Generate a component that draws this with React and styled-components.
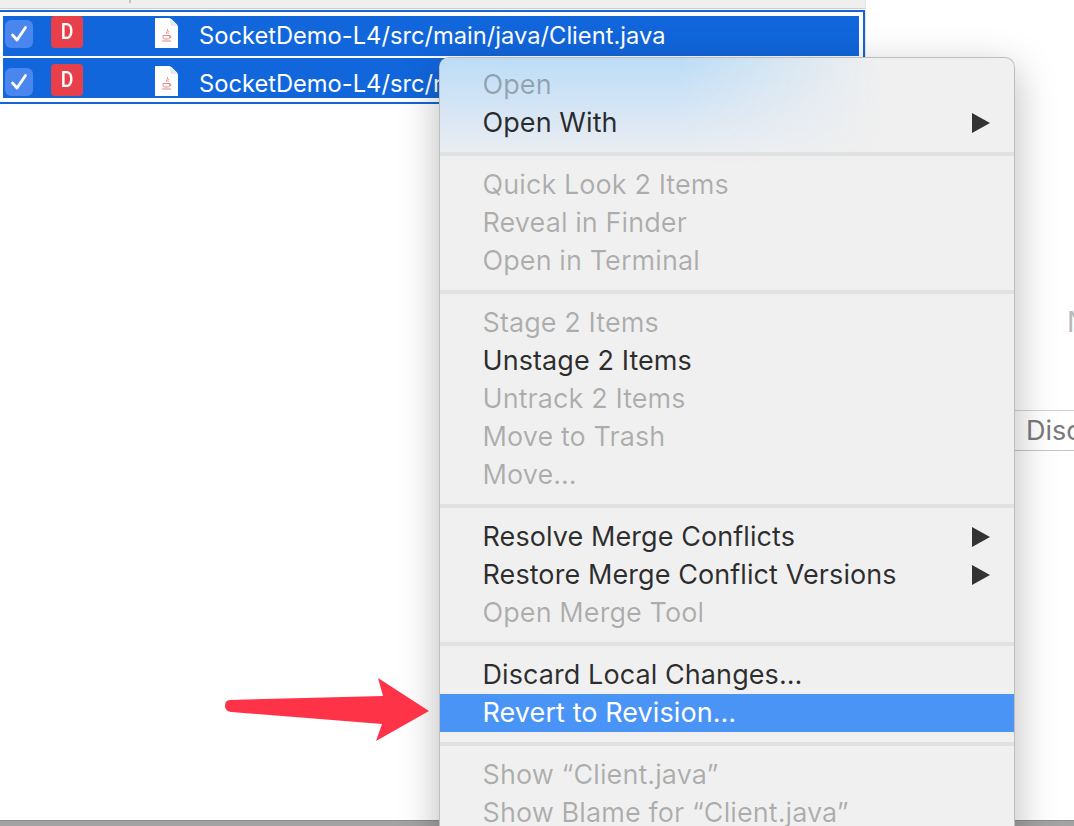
import React from "react";
import styled, { createGlobalStyle } from "styled-components";

const GlobalStyle = createGlobalStyle`
  html, body {
    margin: 0;
    height: 100%;
    background: #fff;
    overflow: hidden;
  }
  body {
    font-family: Inter, "Liberation Sans", sans-serif;
  }
`;

const Page = styled.div`
  position: relative;
  width: 1074px;
  height: 826px;
  display: flex;
  flex-direction: column;
  overflow: hidden;
`;

const Main = styled.div`
  flex: 1;
  min-height: 0;
  display: flex;
`;

const BottomStrip = styled.div`
  height: 5px;
  background: #a3a3a3;
  border-top: 1px solid #8c8c8c;
`;

const LeftPane = styled.div`
  width: 865px;
  border-right: 1px solid #e4e4e4;
  background: #fff;
`;

const Header = styled.div`
  position: relative;
  height: 8px;
  background: #efefef;
  border-bottom: 1px solid #cfcfcf;
  margin-bottom: 1px;

  &::after {
    content: "";
    position: absolute;
    left: 129px;
    top: 0;
    width: 2px;
    height: 3px;
    background: #c4c4c4;
  }
`;

const SelectionFrame = styled.div`
  display: flex;
  flex-direction: column;
  gap: 2px;
  padding: 4px 4px 4px 3px;
  border: 2px solid #1166dc;
  border-left: none;
`;

const Row = styled.div`
  height: 40px;
  display: flex;
  align-items: flex-start;
  padding-top: ${(p) => p.$offset}px;
  box-sizing: border-box;
  background: #1166dc;
  overflow: hidden;
`;

const Check = styled.div`
  width: 28px;
  height: 28px;
  margin: 4px 0 0 2px;
  border-radius: 6px;
  background: #4a86ee;
  display: flex;
  align-items: center;
  justify-content: center;
`;

const Badge = styled.div`
  width: 32px;
  height: 32px;
  margin-left: 18px;
  border-radius: 4px;
  background: #e8404b;
  color: #fff;
  font-family: Roboto, sans-serif;
  font-weight: 500;
  font-size: 22px;
  line-height: 31px;
  text-align: center;
`;

const BadgeLetter = styled.span`
  display: inline-block;
  transform: scaleX(0.88);
`;

const FileIcon = styled.svg`
  width: 23px;
  height: 30px;
  margin: 2px 0 0 72px;
  flex: none;
`;

const FileName = styled.div`
  margin-left: 21px;
  color: #fff;
  font-size: 23.7px;
  line-height: 40px;
  white-space: nowrap;
`;

const RightPane = styled.div`
  flex: 1;
  min-width: 0;
  overflow: hidden;
  padding-top: 304px;
`;

const EmptyNote = styled.div`
  margin-left: 201px;
  color: #b9b9b9;
  font-size: 28px;
  line-height: 36px;
  white-space: nowrap;
`;

const DiscardButton = styled.div`
  margin: 70px 0 0 148px;
  height: 39px;
  border-top: 1px solid #d2d2d2;
  border-bottom: 1px solid #c4c4c4;
  padding-left: 12px;
  color: #7a7a7a;
  font-size: 27px;
  line-height: 40px;
  white-space: nowrap;
`;

const Menu = styled.div`
  position: absolute;
  left: 439px;
  top: 57px;
  width: 574px;
  padding: 8px 0 40px;
  background: #f0f0f0;
  border: 1px solid #bdbdbd;
  border-bottom: none;
  border-radius: 10px 10px 0 0;
  box-shadow: 0 12px 40px rgba(0, 0, 0, 0.28);
  overflow: hidden;

  &::before {
    content: "";
    position: absolute;
    left: 0;
    top: 0;
    width: 440px;
    height: 105px;
    background: linear-gradient(to bottom, #bcdcf6 0%, rgba(222, 232, 244, 0.75) 75%, rgba(240, 240, 240, 0) 100%);
    -webkit-mask-image: linear-gradient(to right, #000 55%, transparent 100%);
    mask-image: linear-gradient(to right, #000 55%, transparent 100%);
  }
`;

const Item = styled.div`
  position: relative;
  height: 38px;
  box-sizing: border-box;
  display: flex;
  align-items: center;
  justify-content: space-between;
  padding: 0 24px 2px 42.500px;
  font-size: 27px;
  letter-spacing: 0.08px;
  white-space: nowrap;
  color: ${(p) => (p.$active ? "#fff" : p.$disabled ? "rgba(0, 0, 0, 0.28)" : "rgba(0, 0, 0, 0.82)")};
  background: ${(p) => (p.$active ? "#4a94f6" : "transparent")};
`;

const SubArrow = styled.span`
  width: 0;
  height: 0;
  margin-top: 2px;
  border-left: 18px solid #333;
  border-top: 10px solid transparent;
  border-bottom: 10px solid transparent;
`;

const Separator = styled.div`
  position: relative;
  height: 4px;
  margin: 10px 0;
  background: #e1e1e1;
`;

const Pointer = styled.svg`
  position: absolute;
  left: 220px;
  top: 670px;
  width: 215px;
  height: 80px;
`;

const rows = [
  { id: 1, offset: 0, path: "SocketDemo-L4/src/main/java/Client.java" },
  { id: 2, offset: 6, path: "SocketDemo-L4/src/main/java/Server.java" },
];

const groups = [
  [
    { label: "Open", disabled: true },
    { label: "Open With", submenu: true },
  ],
  [
    { label: "Quick Look 2 Items", disabled: true },
    { label: "Reveal in Finder", disabled: true },
    { label: "Open in Terminal", disabled: true },
  ],
  [
    { label: "Stage 2 Items", disabled: true },
    { label: "Unstage 2 Items" },
    { label: "Untrack 2 Items", disabled: true },
    { label: "Move to Trash", disabled: true },
    { label: "Move…", disabled: true },
  ],
  [
    { label: "Resolve Merge Conflicts", submenu: true },
    { label: "Restore Merge Conflict Versions", submenu: true },
    { label: "Open Merge Tool", disabled: true },
  ],
  [
    { label: "Discard Local Changes…" },
    { label: "Revert to Revision…", active: true },
  ],
  [
    { label: "Show “Client.java”", disabled: true },
    { label: "Show Blame for “Client.java”", disabled: true },
  ],
];

const JavaFile = () => (
  <FileIcon viewBox="0 0 23 30">
    <path d="M0 0H14C15 0 16 .5 17 1.500L21.500 6C22.500 7 23 8 23 9V30H0Z" fill="#fff" />
    <path d="M15 0.500L22.500 8H17C15.500 8 15 7.500 15 6Z" fill="#e6e9ef" />
    <g fill="none" stroke="#e8858b" strokeWidth="1">
      <path d="M12.500 11c1.200 1.800-2.200 2.800-.8 4.800M14 13c-1 .9-1.600 1.700-.6 2.700" />
      <path d="M8 17.500h6.500v2.200c0 .8-.8 1.300-1.700 1.300h-3c-1 0-1.800-.5-1.800-1.300Z" />
      <path d="M14.500 18h1.300v1.800h-1.300M7 23h9" />
    </g>
  </FileIcon>
);

const CheckMark = () => (
  <svg width="20" height="20" viewBox="0 0 20 20" fill="none">
    <path d="M3.500 11l4.500 5L16.500 3.500" stroke="#fff" strokeWidth="2.800" strokeLinecap="round" strokeLinejoin="round" />
  </svg>
);

const App = () => {
  return (
    <Page>
      <GlobalStyle />
      <Main>
        <LeftPane>
          <Header />
          <SelectionFrame>
            {rows.map((row) => (
              <Row key={row.id} $offset={row.offset}>
                <Check>
                  <CheckMark />
                </Check>
                <Badge>
                  <BadgeLetter>D</BadgeLetter>
                </Badge>
                <JavaFile />
                <FileName>{row.path}</FileName>
              </Row>
            ))}
          </SelectionFrame>
        </LeftPane>
        <RightPane>
          <EmptyNote>No Selection</EmptyNote>
          <DiscardButton>Discard</DiscardButton>
        </RightPane>
      </Main>
      <BottomStrip />

      <Menu>
        {groups.map((group, i) => (
          <React.Fragment key={i}>
            {i > 0 && <Separator />}
            {group.map((item) => (
              <Item key={item.label} $disabled={item.disabled} $active={item.active}>
                {item.label}
                {item.submenu && <SubArrow />}
              </Item>
            ))}
          </React.Fragment>
        ))}
      </Menu>

      <Pointer viewBox="220 670 215 80">
        <path
          d="M230 700L383 696L378 678L429 711L376 741L382 724L231 712Q225 711 225 706Q225 700 230 700Z"
          fill="#ff3347"
        />
      </Pointer>
    </Page>
  );
};

export default App;
